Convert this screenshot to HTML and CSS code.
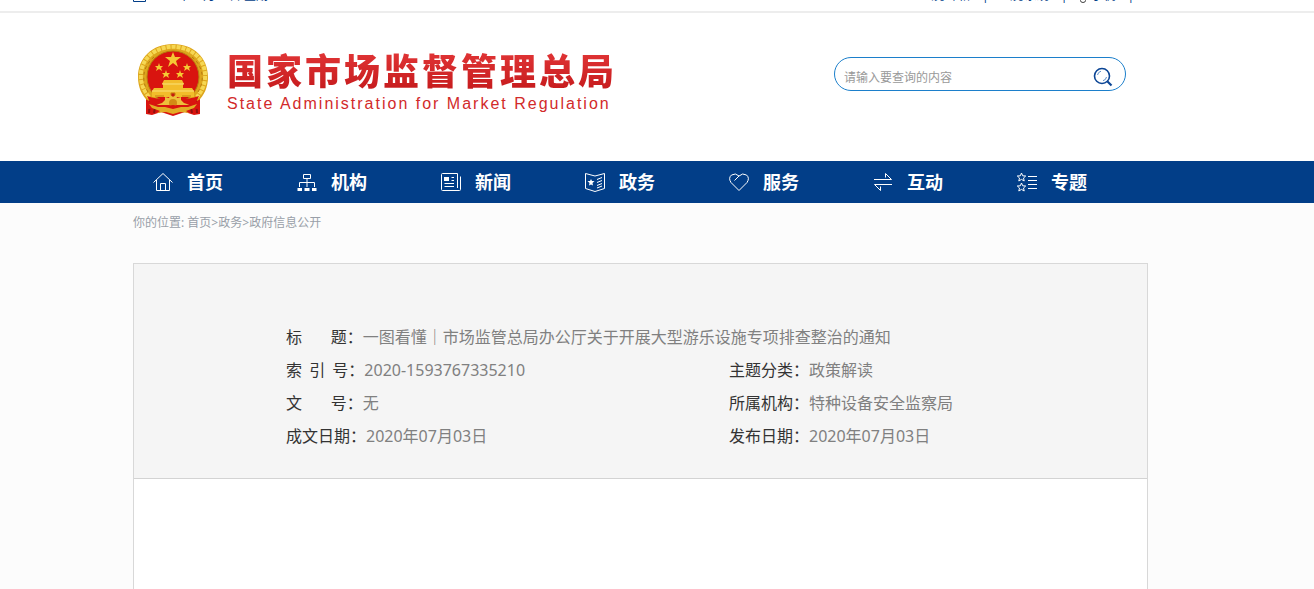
FILE: index.html
```
<!DOCTYPE html>
<html lang="zh-CN">
<head>
    <meta charset="UTF-8">
    <meta name="viewport" content="width=device-width, initial-scale=1.0">
    <title>一图看懂｜市场监管总局办公厅关于开展大型游乐设施专项排查整治的通知</title>
    <link rel="stylesheet" href="styles.css">
</head>
<body>
    <div class="topbar">
        <div class="container topbar-inner">
            <div class="date">
                <svg width="13" height="12" viewBox="0 0 13 12" fill="none" stroke="#023e88"><path d="M.5 1.500h12v10H.5zM.5 4.500h12M3.500 0v3M9.500 0v3"/></svg>
                <span>2020年07月03日 星期五</span>
            </div>
            <div class="toplinks">
                <a href="#">公务邮箱</a><span class="line">|</span>
                <a href="#">公务系统</a><span class="line">|</span>
                <a href="#"><svg width="8" height="14" viewBox="0 0 8 14" fill="none" stroke="#444"><path d="M2.500 1h3v6h-3zM1.500 8.500v3q0 2 2.500 2t2.500-2v-3z"/></svg>手机</a><span class="line">|</span>
            </div>
        </div>
    </div>

    <div class="header">
        <div class="container header-inner">
            <a class="logo" href="#">
                <svg class="emblem" width="72" height="74" viewBox="0 0 72 74">
                    <path d="M9 50L9 71l6 1 9-3 12 4 12-4 9 3 6-1V50z" fill="#d9140f"/>
                    <path d="M13 57l-1 13M19 60l-2 10M59 57l1 13M53 60l2 10" stroke="#8f1010" stroke-width="2"/>
                    <path d="M36 1C15 1 1 15 1 34c0 10 4 19 10 24 8-4 42-4 50 0 6-5 10-14 10-24C71 15 57 1 36 1z" fill="#dda51c"/>
                    <path d="M12 54C0 40 2 22 13 12 26 1 46 1 59 12c11 10 13 28 1 42" fill="none" stroke="#f6d753" stroke-width="4" stroke-dasharray="4 1"/>
                    <path d="M11 49C3 36 7 22 17 14M61 49c8-13 4-27-6-35" fill="none" stroke="#b77b10" stroke-dasharray="3 3"/>
                    <ellipse cx="36" cy="34" rx="26" ry="26" fill="#d9140f" stroke="#b77b10"/>
                    <path d="M36 9l2 5h6l-5 4 2 6-5-4-5 4 2-6-5-4h6zM22 20l1 3h3l-2 2 1 3-3-2-3 2 1-3-2-2h3zM50 20l1 3h3l-2 2 1 3-3-2-3 2 1-3-2-2h3zM29 27l1 3h3l-2 2 1 3-3-2-3 2 1-3-2-2h3zM43 27l1 3h3l-2 2 1 3-3-2-3 2 1-3-2-2h3z" fill="#f5c934"/>
                    <path d="M27 37h18l2 4h-1v4h9l2 3v6H15v-6l2-3h9v-4h-1z" fill="#f2bd2b"/>
                    <path d="M15 48h42M25 41h22" stroke="#fae27a"/>
                    <path d="M34 50h4v4h-4zM18 53h9M45 53h9" fill="#c6190f" stroke="#c47d12"/>
                    <path d="M10 53q12 4 26 3 14 1 26-3l-4 8H14z" fill="#d9140f"/>
                    <path d="M25 60l3-3v-3l4 1 1-3 3 2 3-2 1 3 4-1v3l3 3 6 2H19z" fill="#edc03a"/>
                    <circle cx="36" cy="60" r="4" fill="#d38b14"/>
                    <path d="M10 57q12 8 26 5 14 3 26-5v9q-12-1-26 3-14-4-26-3z" fill="#d9140f"/>
                    <path d="M12 61l9 3 7 0 8 2 8-2 7 0 9-3-3 4-8 3 3 2-9-1-7 2-7-2-9 1 3-2-8-3z" fill="#e3ac25"/>
                </svg>
                <span class="site-name">
                    <span class="name-cn">国家市场监督管理总局</span>
                    <span class="name-en">State Administration for Market Regulation</span>
                </span>
            </a>
            <form class="search">
                <input type="text" placeholder="请输入要查询的内容" aria-label="请输入要查询的内容">
                <button type="submit" aria-label="搜索">
                    <svg width="20" height="20" viewBox="0 0 20 20" fill="none" stroke="#0b4595"><circle cx="9" cy="9" r="7.500" stroke-width="1.600"/><path d="M4.500 8q.5-3 3.500-3.800M13.500 10q-.5 3-3.500 3.700" stroke="#5f8fc8"/><path d="M14.500 14.500l4 4" stroke-width="2.200"/></svg>
                </button>
            </form>
        </div>
    </div>

    <div class="nav">
        <ul class="container nav-list">
            <li><a href="#"><svg viewBox="0 0 20 20"><path d="M.5 10.500L10 1.500l9.500 9M3.500 8v10.500h13V8M7.500 18.500v-7h5v7"/></svg>首页</a></li>
            <li><a href="#"><svg viewBox="0 0 20 20"><path d="M6.500 2.500h7v4h-7zM10 6.500V11M2.500 15v-4.500h15V15M10 10.500V15"/><path d="M.5 17.500h4.500M7.500 17.500h5M15 17.500h4.500" stroke-width="3"/></svg>机构</a></li>
            <li><a href="#"><svg viewBox="0 0 20 20"><path d="M16.500 15.500V1.500h-15q-1 0-1 1v15q0 1 1 1h17q1 0 1-1V4.500M16.500 15v1M10.500 5.500H13M10.500 8.500H13M3.500 11.500H13M3.500 14.500H13"/><path d="M3 5h5v4H3z" fill="#fff" stroke="none"/></svg>新闻</a></li>
            <li><a href="#"><svg viewBox="0 0 20 20"><path d="M.5 1.500L10 4l9.500-2.500v15L10 19.500l-9.500-3zM12 7.500l5-2M12 10.500l5-2M12 13.500l5-2M12 16l5-2"/><path d="M6 7l1 2h2.500l-2 2 .5 2.500-2-1-2 1 .5-2.500-2-2H5z" fill="#fff" stroke="none"/></svg>政务</a></li>
            <li><a href="#"><svg viewBox="0 0 20 20"><path d="M10 18.500L2 10.500Q-1 6 2.500 3 6.500.5 10 4q3.500-3.500 7.500-1 3.500 3 .5 7.500zM10 4L5.500 8.500"/></svg>服务</a></li>
            <li><a href="#"><svg viewBox="0 0 20 20"><path d="M1 7.500h17.500L12.500 1.500v4M19 12.500H1.500l6 6v-4"/></svg>互动</a></li>
            <li><a href="#"><svg viewBox="0 0 20 20"><path d="M4.500 1l1.200 2.800 3 .2-2.200 2 .7 3-2.700-1.600L1.800 9l.7-3L.3 4l3-.2zM4.500 11l1.200 2.800 3 .2-2.200 2 .7 3-2.700-1.600L1.800 19l.7-3-2.200-2 3-.2zM11 4.500h9M11 8.500h9M11 12.500h9M11 16.500h9"/></svg>专题</a></li>
        </ul>
    </div>

    <div class="container">
        <div class="crumbs">你的位置: <a href="#">首页</a>&gt;<a href="#">政务</a>&gt;<a href="#">政府信息公开</a></div>

        <div class="article">
            <table class="info">
                <tr>
                    <td colspan="2"><b>标&nbsp;&nbsp;&nbsp;&nbsp;&nbsp;&nbsp;&nbsp;&nbsp;题：</b>一图看懂｜市场监管总局办公厅关于开展大型游乐设施专项排查整治的通知</td>
                </tr>
                <tr>
                    <td><b>索&nbsp;&nbsp;引&nbsp;&nbsp;号：</b>2020-1593767335210</td>
                    <td><b>主题分类：</b>政策解读</td>
                </tr>
                <tr>
                    <td><b>文&nbsp;&nbsp;&nbsp;&nbsp;&nbsp;&nbsp;&nbsp;&nbsp;号：</b>无</td>
                    <td><b>所属机构：</b>特种设备安全监察局</td>
                </tr>
                <tr>
                    <td><b>成文日期：</b>2020年07月03日</td>
                    <td><b>发布日期：</b>2020年07月03日</td>
                </tr>
            </table>
        </div>
    </div>
</body>
</html>
```
FILE: styles.css
```
* {
    box-sizing: border-box;
}

body {
    margin: 0;
    min-height: 100vh;
    overflow: hidden;
    display: flex;
    flex-direction: column;
    background: #fcfcfc;
    font-family: "Noto Sans", "Noto Sans CJK SC", sans-serif;
    font-size: 12px;
}

a {
    color: inherit;
    text-decoration: none;
}

.container {
    width: 100%;
    max-width: 1048px;
    margin: 0 auto;
}

body > .container {
    flex: 1;
    display: flex;
    flex-direction: column;
}

/* top bar, mostly scrolled out of view */
.topbar {
    margin-top: -30px;
    padding: 17px 0 7px;
    background: #fff;
    border-bottom: 2px solid #ededed;
    color: #023e88;
    line-height: 17px;
}

.topbar-inner,
.date,
.toplinks,
.toplinks a {
    display: flex;
    align-items: center;
}

.topbar-inner {
    justify-content: space-between;
}

.date {
    gap: 4px;
}

.toplinks {
    padding-right: 47px;
}

.toplinks a {
    gap: 4px;
}

.toplinks .line {
    margin: 0 12px;
}

.toplinks .line:last-child {
    margin-right: 0;
}

.header {
    background: #fff;
}

.header-inner {
    display: flex;
    justify-content: space-between;
    padding: 30px 55px 44px 4px;
}

.logo {
    display: flex;
    gap: 18px;
}

.site-name {
    display: flex;
    flex-direction: column;
    padding-top: 2px;
}

.name-cn {
    font-family: "Noto Sans CJK SC", sans-serif;
    font-size: 36px;
    font-weight: 900;
    line-height: 48px;
    letter-spacing: 3px;
    white-space: nowrap;
    background: linear-gradient(#e5393a, #c4191b);
    -webkit-background-clip: text;
    background-clip: text;
    color: transparent;
}

.name-en {
    font-family: "Liberation Sans", Arial, sans-serif;
    font-size: 16px;
    line-height: 22px;
    letter-spacing: 2px;
    white-space: nowrap;
    color: #d22a2a;
}

.search {
    display: flex;
    align-items: center;
    width: 292px;
    height: 34px;
    margin-top: 14px;
    padding: 6px 12px 0 9px;
    border: 1px solid #1c7fcb;
    border-radius: 17px;
}

.search input {
    flex: 1;
    min-width: 0;
    padding: 0;
    border: 0;
    outline: 0;
    background: none;
    font: inherit;
}

.search input::placeholder {
    color: #999;
}

.search button {
    display: flex;
    padding: 0;
    border: 0;
    background: none;
}

.nav {
    background: #023e88;
}

.nav-list {
    display: flex;
    padding: 0;
    list-style: none;
}

.nav-list li {
    width: 144px;
}

.nav-list a {
    display: flex;
    align-items: center;
    gap: 14px;
    height: 42px;
    padding-left: 20px;
    color: #fff;
    font-size: 18px;
    line-height: 24px;
    font-weight: bold;
}

.nav-list svg {
    width: 20px;
    height: 20px;
    fill: none;
    stroke: #fff;
}

.crumbs {
    padding: 10px 0 30px;
    line-height: 20px;
    color: #999fa8;
}

.article {
    flex: 1;
    width: 100%;
    max-width: 1015px;
    background: #fff;
    border: 1px solid #d8d8d8;
    border-bottom: 0;
}

.info {
    display: block;
    padding: 57px 0 25px 152px;
    background: #f5f5f5;
    border-bottom: 1px solid #d3d3d3;
    border-spacing: 0;
    font-size: 16px;
    line-height: 33px;
    color: #808080;
}

.info td {
    min-width: 443px;
    padding: 0;
}

.info b {
    font-family: "Noto Sans CJK SC", sans-serif;
    font-weight: normal;
    line-height: 24px;
    color: #333;
}
```
